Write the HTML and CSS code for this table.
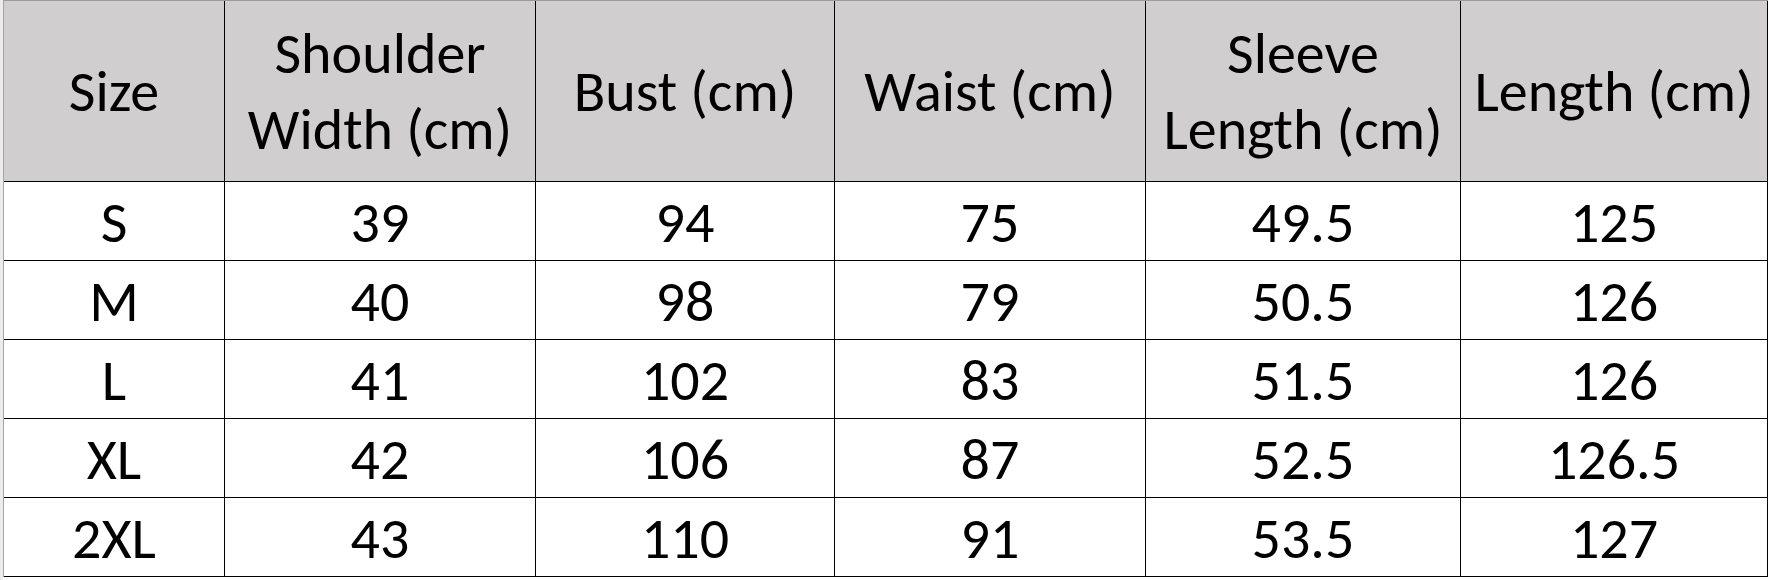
FILE: index.html
```html
<!DOCTYPE html>
<html lang="en">
<head>
<meta charset="utf-8">
<title>Size Chart</title>
<link rel="stylesheet" href="styles.css">
</head>
<body>
<div class="sheet">
  <div class="chart">
    <div class="cell head">Size</div>
    <div class="cell head">Shoulder<br>Width (cm)</div>
    <div class="cell head">Bust (cm)</div>
    <div class="cell head">Waist (cm)</div>
    <div class="cell head">Sleeve<br>Length (cm)</div>
    <div class="cell head">Length (cm)</div>

    <div class="cell">S</div><div class="cell">39</div><div class="cell">94</div><div class="cell">75</div><div class="cell">49.5</div><div class="cell">125</div>
    <div class="cell">M</div><div class="cell">40</div><div class="cell">98</div><div class="cell">79</div><div class="cell">50.5</div><div class="cell">126</div>
    <div class="cell">L</div><div class="cell">41</div><div class="cell">102</div><div class="cell">83</div><div class="cell">51.5</div><div class="cell">126</div>
    <div class="cell">XL</div><div class="cell">42</div><div class="cell">106</div><div class="cell">87</div><div class="cell">52.5</div><div class="cell">126.5</div>
    <div class="cell">2XL</div><div class="cell">43</div><div class="cell">110</div><div class="cell">91</div><div class="cell">53.5</div><div class="cell">127</div>
  </div>
</div>
</body>
</html>
```
FILE: styles.css
```css
html, body {
  margin: 0;
  padding: 0;
  background: #ffffff;
}

.sheet {
  width: 1769px;
  height: 580px;
  background: #ffffff;
  border-left: 3px solid #ececec;
  box-sizing: border-box;
  overflow: hidden;
}

.chart {
  display: grid;
  grid-template-columns: 221px 311px 299px 311px 315px 307px;
  grid-template-rows: 181px repeat(5, 79px);
  border-left: 1px solid #a6a6a6;
  border-top: 1px solid #9a9a9a;
  width: max-content;
  font-family: "Carlito", "Calibri", "Lato", sans-serif;
  font-size: 58px;
  color: #000000;
}

.cell {
  box-sizing: border-box;
  border-right: 1px solid #000000;
  border-bottom: 1px solid #000000;
  display: flex;
  align-items: center;
  justify-content: center;
  text-align: center;
  line-height: 1;
  padding-top: 3px;
}

.head {
  background: #d0cece;
  line-height: 76px;
  padding-top: 1px;
}
```
